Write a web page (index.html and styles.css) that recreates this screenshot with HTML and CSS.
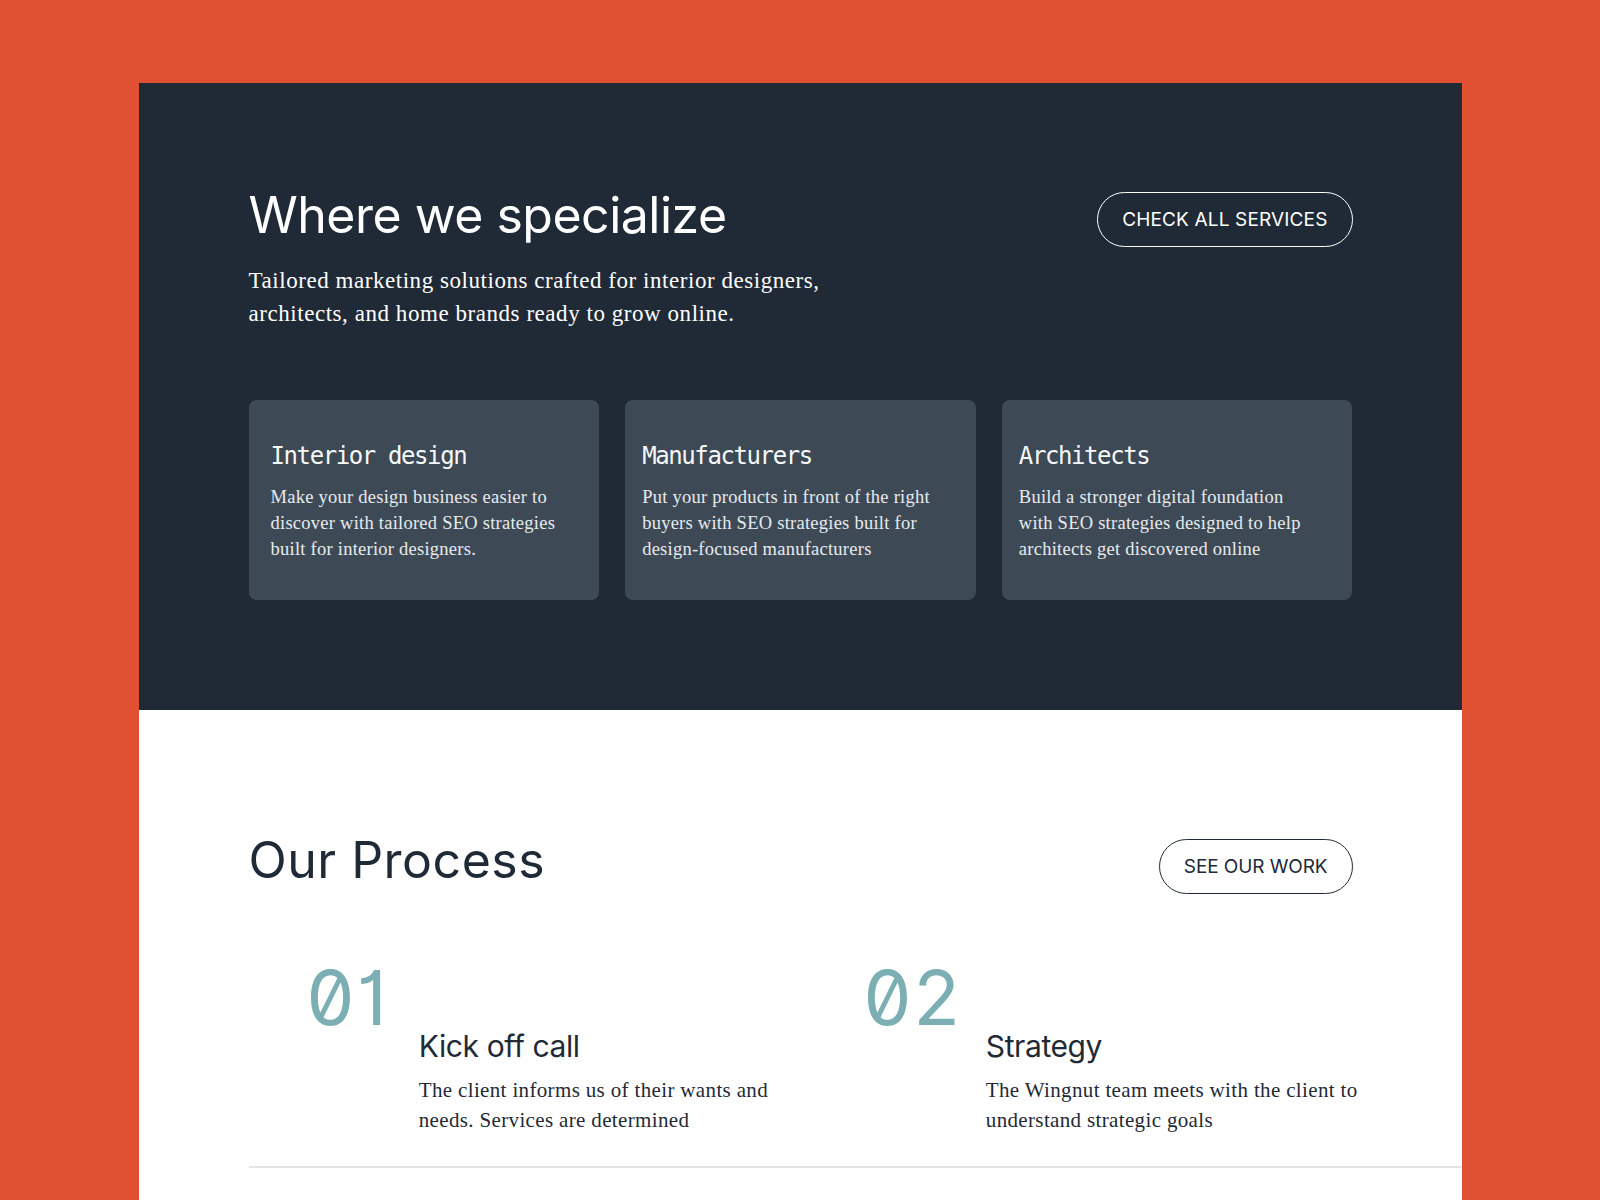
FILE: index.html
```html
<!DOCTYPE html>
<html lang="en">
<head>
<meta charset="utf-8">
<title>Where we specialize</title>
<link rel="stylesheet" href="styles.css">
</head>
<body>
<main class="page">
  <section class="special">
    <div class="section-head">
      <div class="head-text">
        <h2 class="display display-light">Where we specialize</h2>
        <p class="lead">Tailored marketing solutions crafted for interior designers,<br>architects, and home brands ready to grow online.</p>
      </div>
      <a class="pill pill-light" href="#">CHECK ALL SERVICES</a>
    </div>
    <div class="cards">
      <article class="card">
        <h3 class="card-title">Interior design</h3>
        <p class="card-text">Make your design business easier to<br>discover with tailored SEO strategies<br>built for interior designers.</p>
      </article>
      <article class="card">
        <h3 class="card-title">Manufacturers</h3>
        <p class="card-text">Put your products in front of the right<br>buyers with SEO strategies built for<br>design-focused manufacturers</p>
      </article>
      <article class="card">
        <h3 class="card-title">Architects</h3>
        <p class="card-text">Build a stronger digital foundation<br>with SEO strategies designed to help<br>architects get discovered online</p>
      </article>
    </div>
  </section>
  <section class="process">
    <div class="section-head process-head">
      <h2 class="display display-dark">Our Process</h2>
      <a class="pill pill-dark" href="#">SEE OUR WORK</a>
    </div>
    <div class="steps">
      <div class="step">
        <div class="step-num">01</div>
        <div class="step-body">
          <h4 class="step-title">Kick off call</h4>
          <p class="step-text">The client informs us of their wants and<br>needs. Services are determined</p>
        </div>
      </div>
      <div class="step">
        <div class="step-num">02</div>
        <div class="step-body">
          <h4 class="step-title">Strategy</h4>
          <p class="step-text">The Wingnut team meets with the client to<br>understand strategic goals</p>
        </div>
      </div>
    </div>
  </section>
</main>
</body>
</html>
```
FILE: styles.css
```css
html, body {
  margin: 0;
  padding: 0;
}
body {
  background: #e05032;
  height: 1200px;
  overflow: hidden;
  font-family: "Liberation Serif", serif;
}
.page {
  width: 1323px;
  margin: 83px auto 0;
}
.special {
  background: #1f2a36;
  padding: 104px 109px 110px 110px;
}
.section-head {
  display: flex;
  justify-content: space-between;
  align-items: flex-start;
}
.display {
  margin: 0;
  font-family: Inter, "Liberation Sans", sans-serif;
  font-weight: 400;
  font-size: 50px;
  line-height: 57px;
  letter-spacing: -0.5px;
}
.display-light { color: #ffffff; }
.display-dark { color: #1f2a36; letter-spacing: 0.5px; }
.lead {
  margin: 20px 0 0;
  font-family: "Liberation Serif", serif;
  font-size: 23px;
  line-height: 33px;
  letter-spacing: 0.55px;
  color: #ffffff;
}
.pill {
  display: inline-flex;
  align-items: center;
  box-sizing: border-box;
  height: 55px;
  margin-top: 5px;
  padding: 0 24px;
  border-radius: 28px;
  font-family: Inter, "Liberation Sans", sans-serif;
  font-size: 19px;
  letter-spacing: 0.15px;
  text-decoration: none;
  white-space: nowrap;
}
.pill-light {
  color: #ffffff;
  border: 1px solid #ffffff;
}
.pill-dark {
  color: #1f2a36;
  border: 1px solid #1f2a36;
  letter-spacing: -0.1px;
}
.cards {
  margin-top: 70px;
  display: grid;
  grid-template-columns: repeat(3, 1fr);
  gap: 26px;
}
.card {
  background: #3d4a56;
  border-radius: 8px;
  padding: 42px 17px 38px;
}
.card:first-child {
  padding-left: 22px;
}
.card-title {
  margin: 0 0 13px;
  font-family: "DejaVu Sans Mono", monospace;
  font-weight: 400;
  font-size: 24px;
  line-height: 29px;
  letter-spacing: -1.4px;
  color: #f7f8f9;
}
.card-text {
  margin: 0;
  font-size: 18.5px;
  line-height: 26px;
  letter-spacing: 0.25px;
  color: #e8ebee;
  white-space: nowrap;
}
.process {
  background: #ffffff;
  padding: 122px 0 60px 110px;
}
.process-head {
  margin-right: 109px;
}
.process-head .pill {
  margin-top: 7px;
}
.steps {
  margin-top: 57px;
  display: flex;
  overflow: hidden;
  padding-bottom: 31px;
  border-bottom: 2px solid #e4e4e4;
}
.step {
  flex: 0 0 557px;
  box-sizing: border-box;
  display: flex;
  align-items: flex-start;
  padding-left: 58px;
  gap: 30px;
}
.step + .step {
  gap: 24px;
}
.step-num {
  font-family: Inter, "Liberation Sans", sans-serif;
  font-feature-settings: "zero" 1, "cv01" 1;
  font-size: 76px;
  line-height: 92px;
  letter-spacing: 2px;
  color: #7bafb3;
}
.step-body {
  margin-top: 78px;
}
.step-title {
  margin: 0 0 12px;
  font-family: Inter, "Liberation Sans", sans-serif;
  font-weight: 400;
  font-size: 30px;
  line-height: 34px;
  letter-spacing: -0.4px;
  color: #1f2a36;
}
.step-text {
  margin: 0;
  font-size: 21px;
  line-height: 30px;
  letter-spacing: 0.35px;
  color: #1f2a36;
  white-space: nowrap;
}
```
